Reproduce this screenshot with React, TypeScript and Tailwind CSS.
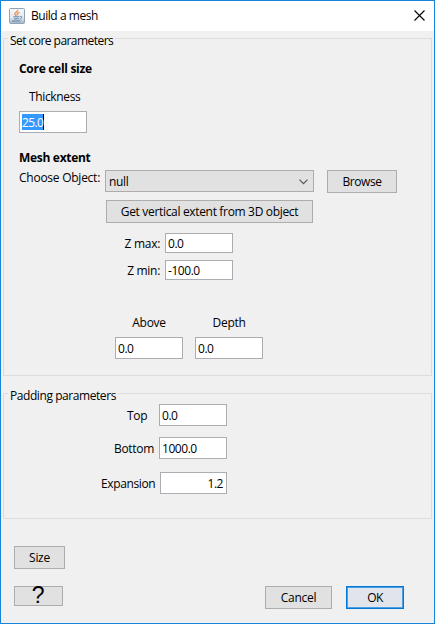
import type { ReactNode } from 'react';

function Text({ className = '', children }: { className?: string; children: ReactNode }) {
  return <span className={`block shrink-0 whitespace-nowrap leading-4 ${className}`}>{children}</span>;
}

function Field({ value, className = '' }: { value: string; className?: string }) {
  return (
    <input
      readOnly
      defaultValue={value}
      className={`block shrink-0 border border-[#abadb3] bg-white px-[2px] tracking-[-0.45px] outline-none ${className}`}
    />
  );
}

function Button({ className = '', children }: { className?: string; children: ReactNode }) {
  return (
    <button className={`flex shrink-0 items-center justify-center border border-[#adadad] bg-[#e1e1e1] whitespace-nowrap ${className}`}>
      {children}
    </button>
  );
}

function JavaIcon() {
  return (
    <svg width="16" height="16" viewBox="0 0 16 16" className="shrink-0">
      <defs>
        <linearGradient id="tile" x1="0" y1="0" x2="0" y2="1">
          <stop offset="0" stopColor="#f7f8f9" />
          <stop offset="0.6" stopColor="#e3e9ee" />
          <stop offset="1" stopColor="#9fb2c3" />
        </linearGradient>
      </defs>
      <rect x="0.5" y="0.5" width="15" height="15" rx="1" fill="url(#tile)" stroke="#8fa3b4" />
      <path d="M8.8 2C9.2 3.8 5.4 4.4 5.8 6.2C6 7 7 7.4 7.2 8.2M10.4 4.4C8.4 5.2 7.4 6 8.6 7.4" fill="none" stroke="#e8873f" strokeWidth="1.2" />
      <path d="M4.4 8.8H10M5 10.8H9.8M3 13H11.4M10.6 8.6C13.6 7.8 13.2 10.4 10.8 11" fill="none" stroke="#5a82a6" strokeWidth="1" />
    </svg>
  );
}

export default function App() {
  return (
    <div className="flex h-[624px] w-[435px] flex-col overflow-hidden border border-[#1883d7] bg-[#f0f0f0] font-['Open_Sans','Noto_Sans',sans-serif] text-[12px] tracking-[-0.3px] text-black">
      <header className="flex h-[30px] shrink-0 items-center bg-white pr-[9px] pl-2">
        <JavaIcon />
        <Text className="ml-[6px] tracking-[-0.45px]">Build a mesh</Text>
        <svg width="11" height="11" viewBox="0 0 11 11" className="mb-px ml-auto" fill="none" stroke="#000" strokeWidth="1.1">
          <path d="M0.5 0.5L10.5 10.5M10.5 0.5L0.5 10.5" />
        </svg>
      </header>

      <section className="mt-[7px] ml-[2px] h-[338px] w-[429px] shrink-0 border border-[#dcdcdc]">
        <Text className="-mt-[6px] ml-1 w-[107px] bg-[#f0f0f0] pl-[2px] tracking-[-0.54px]">Set core parameters</Text>
        <Text className="mt-3 ml-[15px] font-bold">Core cell size</Text>
        <Text className="mt-3 ml-[25px] tracking-[-0.35px]">Thickness</Text>
        <div className="mt-[6px] ml-[15px] flex h-[22px] w-[68px] items-center border border-[#abadb3] bg-white pl-[2px]">
          <span className="block h-4 w-[22px] border-r border-black bg-[#3399ff] pt-px leading-4 tracking-[-0.6px] text-white">25.0</span>
        </div>
        <Text className="mt-[17px] ml-[15px] font-bold">Mesh extent</Text>
        <div className="mt-1 ml-[15px] flex">
          <Text className="w-[86px] tracking-[-0.25px]">Choose Object:</Text>
          <div className="flex h-[22px] w-[209px] items-center justify-between border border-[#adadad] bg-[#e1e1e1] pr-[5px] pl-[3px]">
            <Text className="pt-px">null</Text>
            <svg width="9" height="6" viewBox="0 0 9 6" className="mt-px" fill="none" stroke="#555" strokeWidth="1.2">
              <path d="M0.5 0.7L4.5 4.7L8.5 0.7" />
            </svg>
          </div>
          <Button className="ml-[13px] h-[23px] w-[70px] tracking-[-0.45px]">Browse</Button>
        </div>
        <Button className="mt-[7px] ml-[102px] h-[23px] w-[207px] tracking-[-0.33px]">Get vertical extent from 3D object</Button>
        <div className="mt-[10px] ml-[115px] flex h-5 items-center">
          <Text className="mr-[5px] w-[41px] pt-px text-right">Z max:</Text>
          <Field value="0.0" className="h-5 w-[68px]" />
        </div>
        <div className="mt-[7px] ml-[115px] flex h-5 items-center">
          <Text className="mr-[5px] w-[41px] pt-px text-right">Z min:</Text>
          <Field value="-100.0" className="h-5 w-[68px]" />
        </div>
        <div className="mt-[35px] ml-[111px] flex gap-3">
          <Text className="w-[68px] text-center">Above</Text>
          <Text className="w-[68px] text-center">Depth</Text>
        </div>
        <div className="mt-[6px] ml-[111px] flex gap-3">
          <Field value="0.0" className="h-[22px] w-[68px] pt-px" />
          <Field value="0.0" className="h-[22px] w-[68px] pt-px" />
        </div>
      </section>

      <section className="mt-[17px] ml-[2px] h-[126px] w-[429px] shrink-0 border border-[#dcdcdc]">
        <Text className="-mt-[6px] ml-1 w-[110px] bg-[#f0f0f0] pl-[2px] tracking-[-0.43px]">Padding parameters</Text>
        <div className="ml-[95px] flex h-[22px] items-center">
          <Text className="w-[60px] pt-[2px] pl-7">Top</Text>
          <Field value="0.0" className="h-[22px] w-[68px]" />
        </div>
        <div className="mt-[11px] ml-[95px] flex h-[22px] items-center">
          <Text className="w-[60px] pt-[2px] pl-[15px]">Bottom</Text>
          <Field value="1000.0" className="h-[22px] w-[68px]" />
        </div>
        <div className="mt-[13px] ml-[95px] flex h-[22px] items-center">
          <Text className="w-[61px] pt-[2px] pl-[2px] tracking-[-0.37px]">Expansion</Text>
          <Field value="1.2" className="h-[22px] w-[67px] pr-[3px] text-right" />
        </div>
      </section>

      <Button className="mt-[27px] ml-[13px] h-[23px] w-[51px]">Size</Button>
      <footer className="mt-[17px] ml-[13px] flex shrink-0">
        <Button className="h-5 w-[49px]">
          <span className="-mt-[3px] mr-px font-['Liberation_Sans',sans-serif] text-[23px] leading-[18px]">?</span>
        </Button>
        <Button className="ml-[202px] h-[23px] w-[67px]">Cancel</Button>
        <button className="ml-[14px] flex h-[23px] w-[58px] items-center justify-center border border-[#0078d7] bg-[#e1e5eb] tracking-[-0.5px] ring-1 ring-[#4ba0e3] ring-inset">OK</button>
      </footer>
    </div>
  );
}
